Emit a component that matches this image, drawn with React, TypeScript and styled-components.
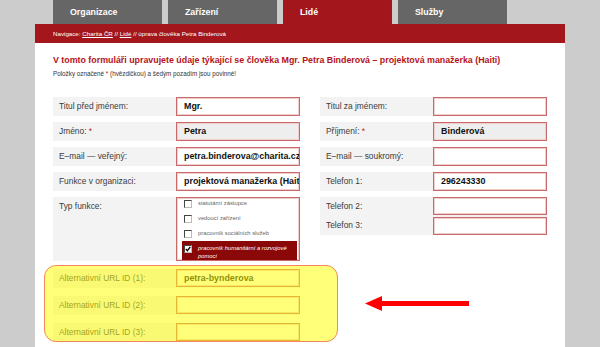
import React from 'react';
import styled, { createGlobalStyle } from 'styled-components';

const GlobalStyle = createGlobalStyle`
  html, body {
    margin: 0;
    padding: 0;
    background: #cccccc;
    overflow: hidden;
  }
  body {
    font-family: "Liberation Sans", Arial, sans-serif;
  }
`;

const Page = styled.div`
  width: 530px;
  height: 347px;
  margin-left: 35px;
  display: flex;
  flex-direction: column;
  overflow: hidden;
`;

const Tabs = styled.div`
  display: flex;
  gap: 6px;
  padding-left: 18px;
  height: 24px;
  flex: none;
`;

const Tab = styled.div<{ $active?: boolean }>`
  width: 109px;
  padding-left: 17px;
  box-sizing: border-box;
  background: ${p => (p.$active ? '#a3161b' : '#666666')};
  color: #ffffff;
  font-size: 8.8px;
  font-weight: bold;
  line-height: 24px;
`;

const Breadcrumb = styled.div`
  height: 19px;
  flex: none;
  background: #a3161b;
  padding-left: 18px;
  color: #ffffff;
  font-size: 6.2px;
  line-height: 19px;
`;

const Content = styled.div`
  position: relative;
  flex: 1;
  background: #ffffff;
  padding: 0 18px;
`;

const Title = styled.h1`
  margin: 11px 0 0;
  font-size: 8.85px;
  line-height: 12px;
  font-weight: bold;
  color: #b5121b;
  white-space: nowrap;
`;

const Note = styled.p`
  margin: 4px 0 0;
  font-size: 6.3px;
  line-height: 8px;
  color: #333333;

  & span {
    color: #c8141c;
  }
`;

const FormGrid = styled.div`
  display: grid;
  grid-template-columns: 247px 227px;
  column-gap: 20px;
  row-gap: 6px;
  margin-top: 19px;
  align-items: start;
`;

const Field = styled.div<{ $labelWidth: number }>`
  display: grid;
  grid-template-columns: ${p => p.$labelWidth}px 1fr;
  background: #f3f3f3;
`;

const Label = styled.div`
  padding-left: 6px;
  font-size: 8.4px;
  line-height: 19px;
  color: #3c3c3c;
  white-space: nowrap;

  & span {
    color: #c8141c;
  }
`;

const Input = styled.div<{ $required?: boolean; $h?: number }>`
  height: ${p => p.$h ?? 19}px;
  box-sizing: border-box;
  border: 1px solid #c86a6a;
  box-shadow: inset 0 0 0 1px #f1cdcd;
  background: ${p => (p.$required ? '#eeeeee' : '#ffffff')};
  padding-left: 7px;
  font-size: 8.9px;
  font-weight: bold;
  line-height: 17px;
  color: #111111;
  overflow: hidden;
  white-space: nowrap;
`;

const LabelStack = styled.div`
  display: flex;
  flex-direction: column;
`;

const InputStack = styled.div`
  display: flex;
  flex-direction: column;
  gap: 2px;
`;

const CheckList = styled.div`
  height: 64px;
  box-sizing: border-box;
  border: 1px solid #c86a6a;
  box-shadow: inset 0 0 0 1px #f1cdcd;
  background: #ffffff;
  overflow: hidden;
  padding: 0 2px 0 6px;
`;

const CheckScroll = styled.div`
  margin-top: -2px;
  display: flex;
  flex-direction: column;
`;

const CheckItem = styled.div<{ $selected?: boolean }>`
  display: flex;
  align-items: flex-start;
  gap: 6px;
  padding: 3px 0 3px 2px;
  margin-left: -1px;
  background: ${p => (p.$selected ? '#8a0808' : 'transparent')};
  color: ${p => (p.$selected ? '#ffffff' : '#666666')};
  font-style: ${p => (p.$selected ? 'italic' : 'normal')};
  font-size: 5.8px;
  line-height: 8px;
`;

const Box = styled.span`
  flex: none;
  width: 6px;
  height: 6px;
  margin-top: 1px;
  border: 1px solid #444444;
  border-right-color: #bbbbbb;
  border-bottom-color: #bbbbbb;
  background: #ffffff;
  display: flex;
  align-items: center;
  justify-content: center;
`;

const AltGrid = styled.div`
  display: flex;
  flex-direction: column;
  gap: 8px;
  margin-top: 8px;
  width: 247px;
`;

const AltField = styled.div`
  display: grid;
  grid-template-columns: 123px 1fr;
  background: #f3f3f3;
`;

const AltInput = styled(Input)`
  height: 18px;
  line-height: 16px;
`;

const NextRow = styled.div`
  display: grid;
  grid-template-columns: 123px 371px;
  margin-top: 7px;
`;

const TextArea = styled.div`
  height: 40px;
  border: 1px solid #c86a6a;
  box-shadow: inset 0 0 0 1px #f1cdcd;
`;

const Highlight = styled.div`
  position: absolute;
  left: 9px;
  top: 222px;
  width: 294px;
  height: 77px;
  box-sizing: border-box;
  background: rgba(255, 255, 0, 0.52);
  border: 1px solid #f5875a;
  border-radius: 12px;
  pointer-events: none;
`;

const Arrow = styled.svg`
  position: absolute;
  left: 330px;
  top: 253px;
`;

const App = () => {
  return (
    <>
      <GlobalStyle />
      <Page>
        <Tabs>
          <Tab>Organizace</Tab>
          <Tab>Zařízení</Tab>
          <Tab $active>Lidé</Tab>
          <Tab>Služby</Tab>
        </Tabs>
        <Breadcrumb>
          Navigace: <u>Charita ČR</u> // <u>Lidé</u> // úprava člověka Petra Binderová
        </Breadcrumb>
        <Content>
          <Title>
            V tomto formuláři upravujete údaje týkající se člověka Mgr. Petra Binderová – projektová manažerka (Haiti)
          </Title>
          <Note>
            Položky označené <span>*</span> (hvězdičkou) a šedým pozadím jsou povinné!
          </Note>

          <FormGrid>
            <Field $labelWidth={123}>
              <Label>Titul před jménem:</Label>
              <Input>Mgr.</Input>
            </Field>
            <Field $labelWidth={113}>
              <Label>Titul za jménem:</Label>
              <Input />
            </Field>

            <Field $labelWidth={123}>
              <Label>
                Jméno: <span>*</span>
              </Label>
              <Input $required>Petra</Input>
            </Field>
            <Field $labelWidth={113}>
              <Label>
                Příjmení: <span>*</span>
              </Label>
              <Input $required>Binderová</Input>
            </Field>

            <Field $labelWidth={123}>
              <Label>E–mail — veřejný:</Label>
              <Input>petra.binderova@charita.cz</Input>
            </Field>
            <Field $labelWidth={113}>
              <Label>E–mail — soukromý:</Label>
              <Input />
            </Field>

            <Field $labelWidth={123}>
              <Label>Funkce v organizaci:</Label>
              <Input>projektová manažerka (Haiti)</Input>
            </Field>
            <Field $labelWidth={113}>
              <Label>Telefon 1:</Label>
              <Input>296243330</Input>
            </Field>

            <Field $labelWidth={123}>
              <Label>Typ funkce:</Label>
              <CheckList>
                <CheckScroll>
                  <CheckItem>
                    <Box />
                    statutární zástupce
                  </CheckItem>
                  <CheckItem>
                    <Box />
                    vedoucí zařízení
                  </CheckItem>
                  <CheckItem>
                    <Box />
                    pracovník sociálních služeb
                  </CheckItem>
                  <CheckItem $selected>
                    <Box>
                      <svg width="6" height="6" viewBox="0 0 6 6">
                        <path d="M0.8 3 L2.4 4.7 L5.3 0.8" stroke="#000" strokeWidth="1.3" fill="none" />
                      </svg>
                    </Box>
                    pracovník humanitární a rozvojové pomoci
                  </CheckItem>
                </CheckScroll>
              </CheckList>
            </Field>
            <Field $labelWidth={113}>
              <LabelStack>
                <Label>Telefon 2:</Label>
                <Label>Telefon 3:</Label>
              </LabelStack>
              <InputStack>
                <Input $h={18} />
                <Input $h={18} />
              </InputStack>
            </Field>
          </FormGrid>

          <AltGrid>
            <AltField>
              <Label>Alternativní URL ID (1):</Label>
              <AltInput>petra-bynderova</AltInput>
            </AltField>
            <AltField>
              <Label>Alternativní URL ID (2):</Label>
              <AltInput />
            </AltField>
            <AltField>
              <Label>Alternativní URL ID (3):</Label>
              <AltInput />
            </AltField>
          </AltGrid>

          <NextRow>
            <Label />
            <TextArea />
          </NextRow>

          <Highlight />
          <Arrow width="106" height="16" viewBox="0 0 106 16">
            <polygon points="0,7.5 17,0 17,15" fill="#ff0000" />
            <rect x="15" y="5" width="89" height="5" fill="#ff0000" />
          </Arrow>
        </Content>
      </Page>
    </>
  );
};

export default App;
